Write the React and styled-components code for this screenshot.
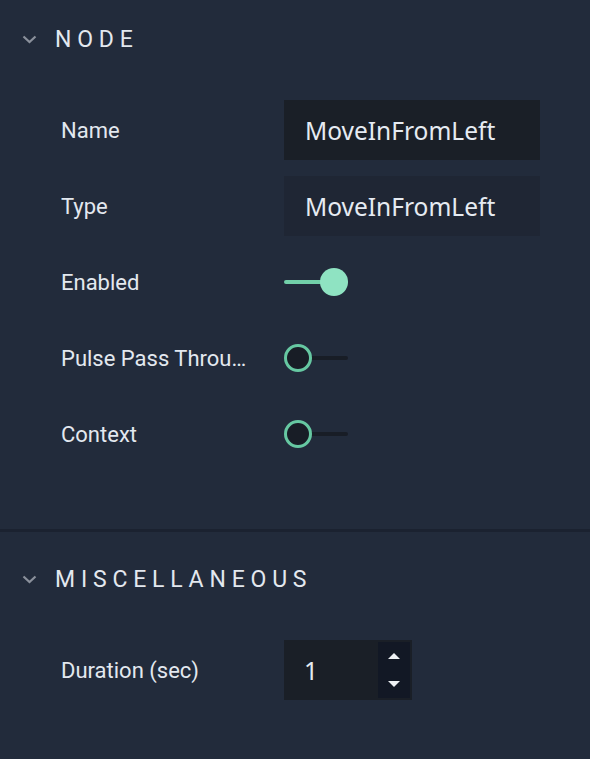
import React from "react";
import styled, { createGlobalStyle } from "styled-components";

const Global = createGlobalStyle`
  html, body { margin: 0; padding: 0; background: #222b3b; }
  body { font-family: Roboto, "Noto Sans", sans-serif; }
`;

const Panel = styled.div`
  width: 590px;
  height: 759px;
  background: #222b3b;
  display: flex;
  flex-direction: column;
  overflow: hidden;
`;

const Section = styled.section`
  display: flex;
  flex-direction: column;
  padding-top: ${(p) => p.$top}px;
  padding-bottom: ${(p) => p.$bottom}px;
  border-bottom: ${(p) => (p.$divider ? "3px solid #1b2230" : "none")};
`;

const Header = styled.div`
  display: flex;
  align-items: center;
  height: 60px;
  padding-left: 22px;
  gap: 18px;
`;

const Title = styled.h2`
  margin: 0;
  font-family: Roboto, sans-serif;
  font-weight: 400;
  font-size: 23px;
  letter-spacing: 5.8px;
  color: #e3e8ef;
`;

const Rows = styled.div`
  display: flex;
  flex-direction: column;
  gap: 16px;
  margin-top: 31px;
  padding-left: 61px;
`;

const Row = styled.div`
  display: grid;
  grid-template-columns: 223px 1fr;
  align-items: center;
  height: 60px;
`;

const Label = styled.div`
  font-family: Roboto, sans-serif;
  font-size: 22px;
  color: #e3e8ef;
  white-space: nowrap;
  overflow: hidden;
  text-overflow: ellipsis;
  max-width: 188px;
`;

const TextBox = styled.div`
  width: 256px;
  height: 60px;
  box-sizing: border-box;
  background: ${(p) => (p.$focused ? "#1a1f27" : "#1f2634")};
  padding-left: 21px;
  display: flex;
  align-items: center;
  font-family: "Noto Sans", "Open Sans", sans-serif;
  font-size: 24.5px;
  color: #e6ebf2;
`;

const Switch = styled.div`
  position: relative;
  width: 64px;
  height: 28px;
`;

const Track = styled.div`
  position: absolute;
  left: 0;
  top: 12px;
  width: 64px;
  height: 4px;
  border-radius: 2px;
  background: ${(p) => (p.$on ? "#72d0a9" : "#181d26")};
`;

const Knob = styled.div`
  position: absolute;
  top: 0;
  left: ${(p) => (p.$on ? "36px" : "0")};
  width: 28px;
  height: 28px;
  box-sizing: border-box;
  border-radius: 50%;
  background: ${(p) => (p.$on ? "#8fe3c2" : "#181d26")};
  border: ${(p) => (p.$on ? "none" : "3px solid #66c8a2")};
`;

const NumberBox = styled.div`
  width: 128px;
  height: 60px;
  box-sizing: border-box;
  background: #1a1f27;
  display: flex;
  align-items: stretch;
  padding: 2px 2px 2px 0;
`;

const NumberValue = styled.div`
  flex: 1;
  display: flex;
  align-items: center;
  padding-left: 20px;
  font-family: "Noto Sans", "Open Sans", sans-serif;
  font-size: 24.5px;
  color: #e6ebf2;
`;

const Spinner = styled.div`
  width: 32px;
  background: #121825;
  display: flex;
  flex-direction: column;
  align-items: center;
  justify-content: space-between;
  padding: 11px 0 10px;
`;

const Chevron = () => (
  <svg width="15" height="9" viewBox="0 0 15 9">
    <path d="M1.5 1.5 L7.5 7 L13.5 1.5" fill="none" stroke="#8a909b" strokeWidth="2.2" />
  </svg>
);

const Tri = ({ down }) => (
  <svg width="14" height="7" viewBox="0 0 14 7">
    <path d={down ? "M1 0 H13 L7 6 Z" : "M7 0 L13 6 H1 Z"} fill="#eef1f5" />
  </svg>
);

const Toggle = ({ on }) => (
  <Switch>
    <Track $on={on} />
    <Knob $on={on} />
  </Switch>
);

export default function App() {
  return (
    <Panel>
      <Global />
      <Section $top={9} $bottom={65} $divider>
        <Header>
          <Chevron />
          <Title>NODE</Title>
        </Header>
        <Rows>
          <Row>
            <Label>Name</Label>
            <TextBox $focused>MoveInFromLeft</TextBox>
          </Row>
          <Row>
            <Label>Type</Label>
            <TextBox>MoveInFromLeft</TextBox>
          </Row>
          <Row>
            <Label>Enabled</Label>
            <Toggle on />
          </Row>
          <Row>
            <Label>Pulse Pass Through</Label>
            <Toggle />
          </Row>
          <Row>
            <Label>Context</Label>
            <Toggle />
          </Row>
        </Rows>
      </Section>
      <Section $top={17} $bottom={0}>
        <Header>
          <Chevron />
          <Title>MISCELLANEOUS</Title>
        </Header>
        <Rows>
          <Row>
            <Label>Duration (sec)</Label>
            <NumberBox>
              <NumberValue>1</NumberValue>
              <Spinner>
                <Tri />
                <Tri down />
              </Spinner>
            </NumberBox>
          </Row>
        </Rows>
      </Section>
    </Panel>
  );
}
